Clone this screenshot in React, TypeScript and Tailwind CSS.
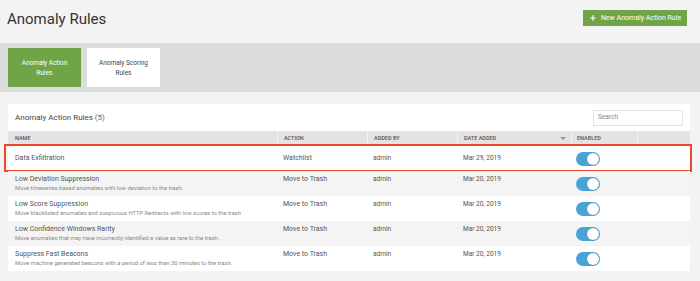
import { Plus } from "lucide-react";

const rules = [
  { name: "Data Exfiltration", desc: "", action: "Watchlist", by: "admin", date: "Mar 29, 2019" },
  {
    name: "Low Deviation Suppression",
    desc: "Move timeseries-based anomalies with low deviation to the trash.",
    action: "Move to Trash",
    by: "admin",
    date: "Mar 20, 2019",
  },
  {
    name: "Low Score Suppression",
    desc: "Move blacklisted anomalies and suspicious HTTP Redirects with low scores to the trash",
    action: "Move to Trash",
    by: "admin",
    date: "Mar 20, 2019",
  },
  {
    name: "Low Confidence Windows Rarity",
    desc: "Move anomalies that may have incorrectly identified a value as rare to the trash.",
    action: "Move to Trash",
    by: "admin",
    date: "Mar 20, 2019",
  },
  {
    name: "Suppress Fast Beacons",
    desc: "Move machine generated beacons with a period of less than 30 minutes to the trash.",
    action: "Move to Trash",
    by: "admin",
    date: "Mar 20, 2019",
  },
];

const cols = "grid grid-cols-[269px_90px_90px_114px_66px_1fr]";

const Toggle = () => (
  <div className="w-[24px] h-[14px] rounded-full bg-[#4aa3d6] relative">
    <div className="absolute right-[1px] top-[1px] w-[12px] h-[12px] rounded-full bg-white shadow-[0_0_1px_rgba(0,0,0,0.35)]" />
  </div>
);

const App = () => {
  return (
    <div className="w-[700px] h-[281px] bg-[#f3f3f3] overflow-hidden font-['Roboto',sans-serif]">
      {/* Page header */}
      <div className="h-[43px] flex justify-between items-start pl-[7px] pr-[13px]">
        <h1 className="mt-[9px] text-[15px] leading-[20px] text-[#333]">Anomaly Rules</h1>
        <button className="mt-[10px] h-[16px] w-[104px] bg-[#6fa447] text-white text-[7px] flex items-center justify-center gap-[4px]">
          <Plus size={8} strokeWidth={3.5} />
          New Anomaly Action Rule
        </button>
      </div>

      {/* Tabs band */}
      <div className="h-[49px] bg-[#dcdcdc] flex items-center gap-[6px] px-[8px]">
        <div className="w-[73px] h-[39px] bg-[#6fa447] text-white text-[6.5px] leading-[10px] flex items-center justify-center text-center px-[6px]">
          Anomaly Action Rules
        </div>
        <div className="w-[73px] h-[39px] bg-white text-[#444] text-[6.5px] leading-[10px] flex items-center justify-center text-center px-[6px]">
          Anomaly Scoring Rules
        </div>
      </div>

      {/* Card */}
      <div className="mt-[12px] ml-[8px] w-[682px] bg-white">
        <div className="h-[27px] flex items-center justify-between pl-[7px] pr-[7px]">
          <div className="text-[8px] text-[#444]">
            Anomaly Action Rules <span className="text-[#666]">(5)</span>
          </div>
          <div className="w-[90px] h-[16px] border border-[#e2e2e2] text-[6.5px] text-[#888] flex items-center px-[4px]">
            Search
          </div>
        </div>

        <div className={`${cols} h-[15px] bg-[#e3e3e3] text-[5.5px] font-medium text-[#555] uppercase items-center`}>
          <div className="pl-[7px]">Name</div>
          <div className="pl-[6px] h-full flex items-center border-l border-[#f2f2f2]">Action</div>
          <div className="pl-[6px] h-full flex items-center border-l border-[#f2f2f2]">Added By</div>
          <div className="pl-[6px] pr-[5px] h-full flex items-center justify-between border-l border-[#f2f2f2]">
            Date Added
            <span className="w-0 h-0 border-l-[3px] border-r-[3px] border-t-[3px] border-l-transparent border-r-transparent border-t-[#999]" />
          </div>
          <div className="pl-[5px] h-full flex items-center border-l border-[#f2f2f2]">Enabled</div>
          <div className="h-full border-l border-[#f2f2f2]" />
        </div>

        {rules.map((r, i) => (
          <div
            key={r.name}
            className={`${cols} relative h-[25px] items-center text-[7px] text-[#555] ${i % 2 === 1 ? "bg-[#f4f4f4]" : "bg-white"}`}
          >
            {i === 0 && (
              <div className="absolute -left-[4px] -right-[2px] -top-[2px] -bottom-[1px] border-[2px] border-[#e9482d]" />
            )}
            <div className="pl-[7px] min-w-0">
              <div className="leading-[9px] whitespace-nowrap">{r.name}</div>
              {r.desc && <div className="text-[5.8px] leading-[8px] text-[#888] whitespace-nowrap">{r.desc}</div>}
            </div>
            <div className="pl-[6px] self-start mt-[4px] leading-[9px]">
              {i === 0 ? <span className="inline-block mt-[4px]">{r.action}</span> : r.action}
            </div>
            <div className="pl-[6px] text-[6.5px] self-start mt-[4px] leading-[9px]">
              {i === 0 ? <span className="inline-block mt-[4px]">{r.by}</span> : r.by}
            </div>
            <div className="pl-[6px] text-[6.5px] self-start mt-[4px] leading-[9px]">
              {i === 0 ? <span className="inline-block mt-[4px]">{r.date}</span> : r.date}
            </div>
            <div className="pl-[5px]">
              <Toggle />
            </div>
            <div />
          </div>
        ))}
      </div>
    </div>
  );
};

export default App;
